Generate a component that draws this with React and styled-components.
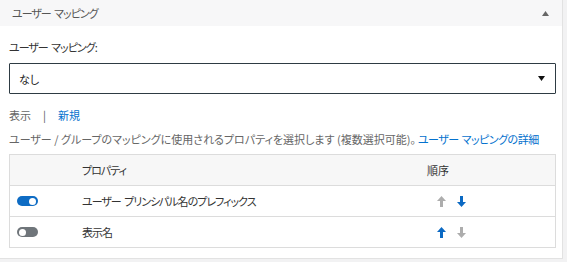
import React from "react";
import styled, { createGlobalStyle } from "styled-components";

const GlobalStyle = createGlobalStyle`
  html, body { margin: 0; padding: 0; background: #f2f2f3; }
  body {
    font-family: "Noto Sans CJK JP", "Noto Sans", sans-serif;
    font-size: 11px;
    font-feature-settings: "palt";
    color: #333;
  }
`;

const Panel = styled.section`
  width: 562px;
  height: 258px;
  background: #fff;
  border-right: 1px solid #e2e2e2;
  border-bottom: 1px solid #e2e2e2;
  display: flex;
  flex-direction: column;
`;

const Header = styled.header`
  height: 26px;
  background: #f7f7f8;
  display: flex;
  align-items: center;
  justify-content: space-between;
  padding: 0 13px 0 12px;
`;

const Kana = styled.span`
  letter-spacing: -1px;
  word-spacing: 2px;
`;

const Title = styled(Kana)`
  color: #555;
  line-height: 16px;
`;

const Body = styled.div`
  padding: 0 6px 0 9px;
  display: flex;
  flex-direction: column;
`;

const FieldLabel = styled.label`
  margin-top: 13px;
  line-height: 16px;
  color: #333;
  letter-spacing: -1px;
  word-spacing: 2px;
`;

const Select = styled.div`
  margin-top: 8px;
  height: 29px;
  border: 1px solid #2e3b43;
  border-radius: 1px;
  display: flex;
  align-items: center;
  justify-content: space-between;
  padding: 0 10px 0 9px;
  color: #222;
`;

const NavRow = styled.div`
  margin-top: 13px;
  line-height: 16px;
  display: flex;
  align-items: center;
  color: #666;
`;

const Sep = styled.span`
  margin: 0 12px 0 12px;
  color: #555;
`;

const Link = styled.a`
  color: #0572ce;
  text-decoration: none;
  cursor: pointer;
  letter-spacing: ${(p) => (p.$tight ? "-0.5px" : "0")};
  word-spacing: ${(p) => (p.$tight ? "1px" : "0")};
  margin-left: ${(p) => (p.$tight ? "2px" : "0")};
`;

const Description = styled.p`
  margin: 8px 0 0;
  line-height: 16px;
  color: #666;
  white-space: nowrap;
`;

const Table = styled.div`
  margin-top: 7px;
  border: 1px solid #dcdcdc;
  width: 545px;
`;

const Row = styled.div`
  display: grid;
  grid-template-columns: 72px 345px 1fr;
  align-items: center;
  height: 30px;
  background: ${(p) => (p.$head ? "#f7f7f7" : "#fff")};
  border-top: ${(p) => (p.$first ? "none" : "1px solid #dcdcdc")};
  color: #333;
`;

const Cell = styled.div`
  display: flex;
  align-items: center;
  padding-left: ${(p) => p.$pl || 0}px;
  gap: ${(p) => p.$gap || 0}px;
`;

const Toggle = styled.span`
  width: 21px;
  height: 10px;
  border-radius: 5px;
  background: ${(p) => (p.$on ? "#0e6cc4" : "#6f757a")};
  position: relative;
  display: inline-block;
  &::after {
    content: "";
    position: absolute;
    top: 1.5px;
    ${(p) => (p.$on ? "right: 2px;" : "left: 2px;")}
    width: 7px;
    height: 7px;
    border-radius: 50%;
    background: #fff;
  }
`;

const Arrow = ({ dir, active }) => (
  <svg width="9" height="11" viewBox="0 0 9 11" style={{ display: "block" }}>
    <g
      fill={active ? "#0b69c3" : "#adadad"}
      transform={dir === "down" ? "rotate(180 4.5 5.5)" : undefined}
    >
      <polygon points="0,5 4.5,0 9,5" />
      <rect x="3" y="4.5" width="3" height="6.5" />
    </g>
  </svg>
);

const Caret = ({ up, color }) => (
  <svg width="7" height="5" viewBox="0 0 7 5" style={{ display: "block" }}>
    <polygon points={up ? "0,5 3.5,0 7,5" : "0,0 7,0 3.5,5"} fill={color} />
  </svg>
);

const rows = [
  { name: "ユーザー プリンシパル名のプレフィックス", on: true, up: false, down: true },
  { name: "表示名", on: false, up: true, down: false },
];

export default function App() {
  return (
    <>
      <GlobalStyle />
      <Panel>
        <Header>
          <Title>ユーザー マッピング</Title>
          <Caret up color="#666" />
        </Header>
        <Body>
          <FieldLabel>ユーザー マッピング:</FieldLabel>
          <Select>
            <span>なし</span>
            <Caret color="#111" />
          </Select>
          <NavRow>
            <span>表示</span>
            <Sep>|</Sep>
            <Link>新規</Link>
          </NavRow>
          <Description>
            ユーザー / グループのマッピングに使用されるプロパティを選択します (複数選択可能)。
            <Link $tight>ユーザー マッピングの詳細</Link>
          </Description>
          <Table>
            <Row $head $first>
              <Cell />
              <Cell>
                <Kana>プロパティ</Kana>
              </Cell>
              <Cell>順序</Cell>
            </Row>
            {rows.map((r) => (
              <Row key={r.name}>
                <Cell $pl={7}>
                  <Toggle $on={r.on} />
                </Cell>
                <Cell>
                  <Kana>{r.name}</Kana>
                </Cell>
                <Cell $pl={10} $gap={11}>
                  <Arrow dir="up" active={r.up} />
                  <Arrow dir="down" active={r.down} />
                </Cell>
              </Row>
            ))}
          </Table>
        </Body>
      </Panel>
    </>
  );
}
